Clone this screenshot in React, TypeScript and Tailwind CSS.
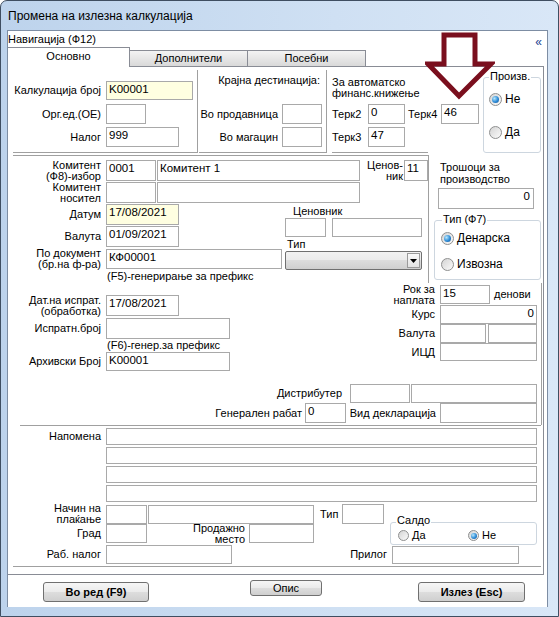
import React from 'react';

type BoxProps = {
  w: string;
  h?: string;
  v?: string;
  yellow?: boolean;
  right?: boolean;
  className?: string;
};

// text box, classic WinForms look
const Box = ({ w, h = 'h-[20px]', v, yellow, right, className = '' }: BoxProps) => (
  <div
    className={`${w} ${h} shrink-0 border border-[#a9a9a9] ${yellow ? 'bg-[#ffffe1]' : 'bg-white'} px-[2px] text-[11.5px] leading-[14px] whitespace-nowrap overflow-hidden ${right ? 'text-right' : ''} ${className}`}
  >
    {v}
  </div>
);

const Lbl = ({ w, children, className = '' }: { w: string; children: React.ReactNode; className?: string }) => (
  <div className={`${w} shrink-0 text-right leading-[11px] whitespace-nowrap ${className}`}>{children}</div>
);

const Radio = ({ on, small }: { on?: boolean; small?: boolean }) => (
  <span
    className={`${small ? 'w-[11px] h-[11px]' : 'w-[13px] h-[13px]'} shrink-0 rounded-full border border-[#8e8f8f] bg-[linear-gradient(135deg,#d4d4d4,#fbfbfb)] flex items-center justify-center`}
  >
    {on && (
      <span
        className={`${small ? 'w-[6px] h-[6px]' : 'w-[7px] h-[7px]'} rounded-full bg-[radial-gradient(circle_at_35%_35%,#b8e8fd,#2b8ad6_55%,#174f8c)]`}
      />
    )}
  </span>
);

const Btn = ({ children, className = '' }: { children: React.ReactNode; className?: string }) => (
  <div
    className={`shrink-0 flex items-center justify-center rounded-[3px] border border-[#707070] bg-[linear-gradient(#f6f6f6,#ebebeb_48%,#dddddd_52%,#cfcfcf)] text-[11px] leading-none ${className}`}
  >
    {children}
  </div>
);

export default function App() {
  return (
    <div className="relative w-[559px] h-[617px] overflow-hidden rounded-t-[7px] border border-[#3f4e61] bg-[linear-gradient(90deg,#bdd3ec,#cfe0f3_60%,#d9e7f7)] text-[11px] text-black font-['Liberation_Sans',Arial,sans-serif] flex flex-col">
      {/* title bar */}
      <div className="h-[29px] shrink-0 flex items-center pl-[7px] text-[12px]">Промена на излезна калкулација</div>

      <div className="flex-1 flex pl-[6px] pr-[10px] pb-[9px]">
        {/* client */}
        <div className="flex-1 flex flex-col border-t border-l border-r border-[#7d8da3] bg-white">
          {/* nav header */}
          <div className="h-[16px] shrink-0 flex items-center justify-between">
            <span className="leading-[13px]">Навигација (Ф12)</span>
            <span className="mt-[6px] mr-[5px] text-[12px] leading-none text-[#1c3f8f]">«</span>
          </div>

          {/* tabs */}
          <div className="h-[19px] shrink-0 flex items-end">
            <div className="relative z-10 h-[20px] -mb-[1px] w-[122px] border-t border-r border-[#898c95] bg-white flex justify-center pt-[2px] leading-[13px]">
              Основно
            </div>
            <div className="h-[16px] w-[118px] border-t border-r border-[#898c95] bg-[linear-gradient(#f3f3f3,#e6e6e6_50%,#d9d9d9)] flex justify-center pt-[1px] leading-[13px]">
              Дополнители
            </div>
            <div className="h-[16px] w-[118px] border-t border-r border-[#898c95] bg-[linear-gradient(#f3f3f3,#e6e6e6_50%,#d9d9d9)] flex justify-center pt-[1px] leading-[13px]">
              Посебни
            </div>
          </div>

          {/* tab page */}
          <div className="h-[509px] w-[536px] shrink-0 border-t border-r border-b border-[#898c95] bg-white flex flex-col pl-[5px]">
            {/* section A */}
            <div className="flex mt-[3px] h-[83px] shrink-0">
              <div className="w-[185px] h-[83px] border-r border-b border-[#a0a0a0] flex flex-col pt-[11px]">
                <div className="flex items-center h-[19px]">
                  <Lbl w="w-[88px]">Калкулација број</Lbl>
                  <Box w="w-[87px]" h="h-[19px]" v="K00001" yellow className="ml-[5px]" />
                </div>
                <div className="flex items-center h-[20px] mt-[4px]">
                  <Lbl w="w-[88px]">Орг.ед.(ОЕ)</Lbl>
                  <Box w="w-[40px]" className="ml-[5px]" />
                </div>
                <div className="flex items-center h-[20px] mt-[3px]">
                  <Lbl w="w-[88px]">Налог</Lbl>
                  <Box w="w-[73px]" v="999" className="ml-[5px]" />
                </div>
              </div>

              <div className="ml-[1px] w-[128px] h-[83px] border-r border-b border-[#a0a0a0] flex flex-col">
                <div className="pt-[4px] pr-[6px] text-right leading-[13px]">Крајна дестинација:</div>
                <div className="mt-[17px] flex items-center justify-end pr-[4px] h-[20px]">
                  <span>Во продавница</span>
                  <Box w="w-[40px]" className="ml-[4px]" />
                </div>
                <div className="mt-[3px] flex items-center justify-end pr-[4px] h-[20px]">
                  <span>Во магацин</span>
                  <Box w="w-[40px]" className="ml-[4px]" />
                </div>
              </div>

              <div className="ml-[2px] w-[152px] h-[83px] flex flex-col pl-[3px]">
                <div className="pt-[7px] leading-[11px]">
                  За автоматско
                  <br />
                  финанс.книжење
                </div>
                <div className="mt-[5px] flex items-center h-[20px]">
                  <span className="w-[36px]">Терк2</span>
                  <Box w="w-[37px]" v="0" />
                  <span className="ml-[3px] w-[33px]">Терк4</span>
                  <Box w="w-[38px]" v="46" />
                </div>
                <div className="mt-[3px] flex items-center h-[20px]">
                  <span className="w-[36px]">Терк3</span>
                  <Box w="w-[37px]" v="47" />
                </div>
                <div className="mt-auto w-[96px] border-b border-[#a0a0a0]" />
              </div>

              <div className="ml-[2px] mt-[7px] w-[58px] h-[76px] rounded-[3px] border border-[#cdd6df] flex flex-col">
                <div className="-mt-[8px] ml-[5px] w-fit bg-white px-[1px] leading-[13px]">Произв.</div>
                <div className="mt-[10px] pl-[5px] flex items-center gap-[3px] text-[12px] leading-[13px]">
                  <Radio on />
                  Не
                </div>
                <div className="mt-[20px] pl-[5px] flex items-center gap-[3px] text-[12px] leading-[13px]">
                  <Radio />
                  Да
                </div>
              </div>
            </div>

            {/* section B */}
            <div className="flex mt-[2px] shrink-0">
              <div className="w-[416px] h-[128px] border-t border-r border-[#a0a0a0] flex flex-col">
                <div className="mt-[4px] flex items-center h-[21px]">
                  <Lbl w="w-[88px]">
                    Комитент
                    <br />
                    (Ф8)-избор
                  </Lbl>
                  <Box w="w-[50px]" h="h-[21px]" v="0001" className="ml-[5px]" />
                  <Box w="w-[203px]" h="h-[21px]" v="Комитент 1" className="ml-[1px]" />
                  <Lbl w="w-[43px]">
                    Ценов-
                    <br />
                    ник
                  </Lbl>
                  <Box w="w-[24px]" h="h-[21px]" v="11" className="ml-[1px]" />
                </div>
                <div className="mt-[1px] flex items-center h-[21px]">
                  <Lbl w="w-[88px]">
                    Комитент
                    <br />
                    носител
                  </Lbl>
                  <Box w="w-[50px]" h="h-[21px]" className="ml-[5px]" />
                  <Box w="w-[203px]" h="h-[21px]" className="ml-[1px]" />
                </div>
                <div className="mt-[1px] flex">
                  <div className="w-[269px] flex flex-col">
                    <div className="flex items-center h-[21px]">
                      <Lbl w="w-[88px]">Датум</Lbl>
                      <Box w="w-[73px]" h="h-[21px]" v="17/08/2021" yellow className="ml-[5px]" />
                    </div>
                    <div className="mt-[1px] flex items-center h-[21px]">
                      <Lbl w="w-[88px]">Валута</Lbl>
                      <Box w="w-[73px]" h="h-[21px]" v="01/09/2021" className="ml-[5px]" />
                    </div>
                    <div className="mt-[2px] flex items-center h-[20px]">
                      <Lbl w="w-[88px]" className="leading-[10px]">
                        По документ
                        <br />
                        (бр.на ф-ра)
                      </Lbl>
                      <Box w="w-[176px]" v="КФ00001" className="ml-[5px]" />
                    </div>
                    <div className="ml-[94px] mt-[1px] leading-[13px] whitespace-nowrap">(F5)-генерирање за префикс</div>
                  </div>
                  <div className="ml-[3px] w-[137px] flex flex-col">
                    <div className="pl-[8px] mt-[1px] leading-[13px]">Ценовник</div>
                    <div className="flex">
                      <Box w="w-[41px]" h="h-[19px]" />
                      <Box w="w-[90px]" h="h-[19px]" className="ml-[6px]" />
                    </div>
                    <div className="pl-[2px] mt-[1px] leading-[13px]">Тип</div>
                    <div className="w-[137px] h-[19px] border border-[#707070] rounded-[2px] bg-[linear-gradient(#f2f2f2,#ebebeb_50%,#dddddd_50%,#cfcfcf)] flex justify-end items-center pr-[1px]">
                      <div className="w-[13px] h-[15px] border border-[#9a9a9a] bg-[linear-gradient(#fafafa,#e2e2e2)] flex items-center justify-center">
                        <svg width="7" height="4" viewBox="0 0 7 4">
                          <path d="M0 0h7L3.5 4z" fill="#000" />
                        </svg>
                      </div>
                    </div>
                  </div>
                </div>
              </div>

              <div className="w-[112px] flex flex-col">
                <div className="pt-[6px] pl-[11px] leading-[12px]">
                  Трошоци за
                  <br />
                  производство
                </div>
                <Box w="w-[96px]" h="h-[21px]" v="0" right className="mt-[3px] ml-[9px] pr-[3px]" />
                <div className="ml-[5px] mt-[11px] w-[107px] h-[60px] rounded-[3px] border border-[#cdd6df] flex flex-col">
                  <div className="-mt-[8px] ml-[7px] w-fit bg-white px-[1px] leading-[13px]">Тип (Ф7)</div>
                  <div className="mt-[6px] pl-[6px] flex items-center gap-[3px] text-[12px] leading-[13px]">
                    <Radio on />
                    Денарска
                  </div>
                  <div className="mt-[13px] pl-[6px] flex items-center gap-[3px] text-[12px] leading-[13px]">
                    <Radio />
                    Извозна
                  </div>
                </div>
              </div>
            </div>

            {/* section C */}
            <div className="w-[529px] h-[142px] shrink-0 border-r border-[#a0a0a0] flex flex-col">
              <div className="flex h-[88px]">
                <div className="w-[347px] flex flex-col pt-[12px]">
                  <div className="flex items-center h-[21px]">
                    <Lbl w="w-[88px]">
                      Дат.на испрат.
                      <br />
                      (обработка)
                    </Lbl>
                    <Box w="w-[73px]" h="h-[21px]" v="17/08/2021" className="ml-[5px]" />
                  </div>
                  <div className="mt-[2px] flex items-center h-[21px]">
                    <Lbl w="w-[88px]">Испратн.број</Lbl>
                    <Box w="w-[124px]" h="h-[21px]" className="ml-[5px]" />
                  </div>
                  <div className="ml-[94px] leading-[13px] whitespace-nowrap">(F6)-генер.за префикс</div>
                  <div className="flex items-center h-[19px]">
                    <Lbl w="w-[88px]">Архивски Број</Lbl>
                    <Box w="w-[124px]" h="h-[19px]" v="K00001" className="ml-[5px]" />
                  </div>
                </div>
                <div className="flex flex-col pt-[2px]">
                  <div className="flex items-center h-[19px]">
                    <Lbl w="w-[75px]" className="leading-[10px]">
                      Рок за
                      <br />
                      наплата
                    </Lbl>
                    <Box w="w-[50px]" h="h-[19px]" v="15" className="ml-[5px]" />
                    <span className="ml-[4px]">денови</span>
                  </div>
                  <div className="mt-[1px] flex items-center h-[19px]">
                    <Lbl w="w-[75px]">Курс</Lbl>
                    <Box w="w-[97px]" h="h-[19px]" v="0" right className="ml-[5px]" />
                  </div>
                  <div className="flex items-center h-[19px]">
                    <Lbl w="w-[75px]">Валута</Lbl>
                    <Box w="w-[46px]" h="h-[19px]" className="ml-[5px]" />
                    <Box w="w-[49px]" h="h-[19px]" className="ml-[2px]" />
                  </div>
                  <div className="flex items-center h-[18px]">
                    <Lbl w="w-[75px]">ИЦД</Lbl>
                    <Box w="w-[97px]" h="h-[18px]" className="ml-[5px]" />
                  </div>
                </div>
              </div>
              <div className="mt-[13px] flex items-center h-[19px]">
                <Lbl w="w-[329px]">Дистрибутер</Lbl>
                <Box w="w-[60px]" h="h-[19px]" className="ml-[8px]" />
                <Box w="w-[126px]" h="h-[19px]" className="ml-[1px]" />
              </div>
              <div className="flex items-center h-[20px]">
                <Lbl w="w-[289px]">Генерален рабат</Lbl>
                <Box w="w-[41px]" v="0" className="ml-[3px]" />
                <Lbl w="w-[90px]">Вид декларација</Lbl>
                <Box w="w-[97px]" className="ml-[4px]" />
              </div>
            </div>

            {/* section D */}
            <div className="ml-[7px] w-[521px] border-t border-[#a0a0a0]" />
            <div className="flex mt-[2px]">
              <Lbl w="w-[88px]" className="pt-[2px] leading-[13px]">
                Напомена
              </Lbl>
              <div className="ml-[5px] flex flex-col gap-[2px]">
                <Box w="w-[431px]" h="h-[17px]" />
                <Box w="w-[431px]" h="h-[17px]" />
                <Box w="w-[431px]" h="h-[17px]" />
                <Box w="w-[431px]" h="h-[17px]" />
              </div>
            </div>
            <div className="flex mt-[2px]">
              <div className="w-[371px] flex flex-col">
                <div className="flex items-center h-[20px]">
                  <Lbl w="w-[88px]" className="leading-[10px]">
                    Начин на
                    <br />
                    плаќање
                  </Lbl>
                  <Box w="w-[41px]" h="h-[19px]" className="ml-[5px]" />
                  <Box w="w-[166px]" h="h-[19px]" className="ml-[1px]" />
                  <span className="ml-[6px] w-[22px]">Тип</span>
                  <Box w="w-[42px]" />
                </div>
                <div className="flex items-center h-[19px]">
                  <Lbl w="w-[88px]">Град</Lbl>
                  <Box w="w-[41px]" h="h-[19px]" className="ml-[5px]" />
                  <Lbl w="w-[98px]" className="leading-[9px]">
                    Продажно
                    <br />
                    место
                  </Lbl>
                  <Box w="w-[65px]" h="h-[19px]" className="ml-[4px]" />
                </div>
              </div>
              <div className="ml-[6px] mt-[18px] w-[147px] h-[23px] rounded-[3px] border border-[#cdd6df] flex flex-col">
                <div className="-mt-[9px] ml-[5px] w-fit bg-white px-[1px] leading-[13px]">Салдо</div>
                <div className="mt-[3px] pl-[7px] flex items-center">
                  <div className="w-[70px] flex items-center gap-[3px] leading-[11px]">
                    <Radio small />
                    Да
                  </div>
                  <div className="flex items-center gap-[3px] leading-[11px]">
                    <Radio small on />
                    Не
                  </div>
                </div>
              </div>
            </div>
            <div className="flex items-center h-[19px]">
              <Lbl w="w-[88px]">Раб. налог</Lbl>
              <Box w="w-[126px]" h="h-[19px]" className="ml-[5px]" />
              <Lbl w="w-[155px]">Прилог</Lbl>
              <Box w="w-[127px]" h="h-[18px]" className="ml-[5px]" />
            </div>
            <div className="mt-[2px] w-[528px] border-b border-[#a0a0a0]" />
          </div>

          {/* buttons */}
          <div className="flex items-start pt-[7px]">
            <Btn className="ml-[35px] w-[106px] h-[20px] font-bold">Во ред (F9)</Btn>
            <Btn className="ml-[101px] -mt-[2px] w-[72px] h-[16px]">Опис</Btn>
            <Btn className="ml-[96px] w-[107px] h-[20px] font-bold">Излез (Esc)</Btn>
          </div>
        </div>
      </div>

      {/* annotation arrow */}
      <svg className="absolute left-[424px] top-[30px]" width="70" height="70" viewBox="0 0 70 70">
        <polygon
          points="19,4 50,4 50,33 66,33 34,65 3,33 19,33"
          fill="none"
          stroke="#7a0f1e"
          strokeWidth="5"
          strokeLinejoin="miter"
        />
      </svg>
    </div>
  );
}
